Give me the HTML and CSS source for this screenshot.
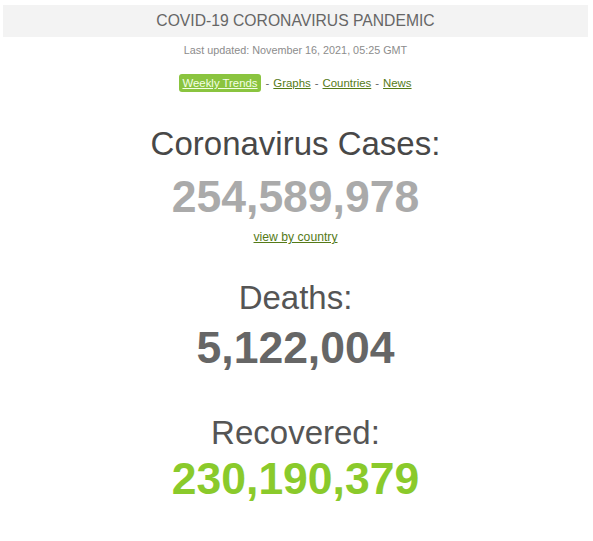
FILE: index.html
```html
<!DOCTYPE html>
<html>
<head>
<meta charset="utf-8">
<link rel="stylesheet" href="styles.css">
</head>
<body>
<div class="page">
  <div class="header">COVID-19 CORONAVIRUS PANDEMIC</div>
  <div class="updated">Last updated: November 16, 2021, 05:25 GMT</div>
  <div class="nav">
    <a class="nav-btn" href="#">Weekly Trends</a>
    <span class="sep">-</span>
    <a class="nav-link" href="#">Graphs</a>
    <span class="sep">-</span>
    <a class="nav-link" href="#">Countries</a>
    <span class="sep">-</span>
    <a class="nav-link" href="#">News</a>
  </div>

  <h1 class="label label-cases">Coronavirus Cases:</h1>
  <div class="number number-cases">254,589,978</div>
  <a class="by-country" href="#">view by country</a>

  <h1 class="label label-deaths">Deaths:</h1>
  <div class="number number-deaths">5,122,004</div>

  <h1 class="label label-recovered">Recovered:</h1>
  <div class="number number-recovered">230,190,379</div>
</div>
</body>
</html>
```

FILE: styles.css
```css
html, body {
  margin: 0;
  padding: 0;
  background: #ffffff;
}
body {
  padding: 5px 5px 0 3px;
  font-family: "Liberation Sans", Arial, sans-serif;
}
.page {
  display: flex;
  flex-direction: column;
  align-items: center;
}
.header {
  align-self: stretch;
  height: 32px;
  background: #f3f3f3;
  color: #666666;
  font-size: 15.7px;
  display: flex;
  align-items: center;
  justify-content: center;
}
.updated {
  margin-top: 7px;
  font-size: 10.8px;
  line-height: 13px;
  color: #8c8c8c;
}
.nav {
  margin-top: 17px;
  display: flex;
  align-items: center;
  gap: 4px;
  font-size: 11.4px;
  line-height: 14px;
  color: #666666;
}
.nav-btn {
  background: #8ac43f;
  color: #f4ffe6;
  border-radius: 3px;
  padding: 2px 3px;
  height: 18px;
  box-sizing: border-box;
  display: flex;
  align-items: center;
  text-decoration: underline;
  margin-right: 1px;
}
.nav-link {
  color: #557a17;
  text-decoration: underline;
}
.sep {
  color: #666666;
}
.label {
  margin: 0;
  font-weight: normal;
  font-size: 33px;
  line-height: 33px;
  color: #484848;
}
.label-cases { margin-top: 35px; }
.label-deaths { margin-top: 37px; color: #555555; }
.label-recovered { margin-top: 46px; color: #555555; }
.number {
  font-weight: bold;
  font-size: 44.5px;
  line-height: 44px;
}
.number-cases { margin-top: 15px; color: #aaaaaa; }
.number-deaths { margin-top: 12px; color: #666666; }
.number-recovered { margin-top: 8px; color: #8aca2b; }
.by-country {
  margin-top: 11px;
  font-size: 12.2px;
  line-height: 14px;
  color: #557a17;
  text-decoration: underline;
}
```
